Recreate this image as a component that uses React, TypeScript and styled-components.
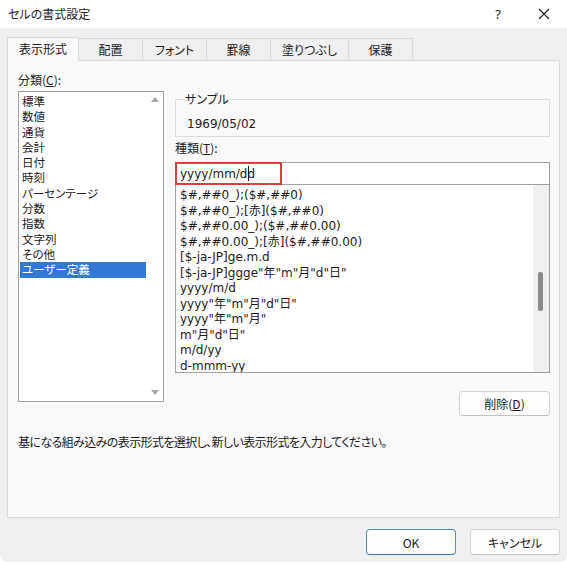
import styled, { createGlobalStyle } from 'styled-components';

const GlobalStyle = createGlobalStyle`
  html,
  body {
    margin: 0;
    padding: 0;
    background: #ffffff;
  }
  body {
    font-family: 'Noto Sans CJK JP', 'Noto Sans', sans-serif;
    font-size: 12px;
    color: #1b1b1b;
    font-feature-settings: 'palt';
  }
  * {
    box-sizing: border-box;
  }
`;

const Dialog = styled.div`
  width: 567px;
  height: 562px;
  display: flex;
  flex-direction: column;
  background: #f0f0f0;
  border-radius: 0 0 7px 7px;
  overflow: hidden;
`;

const TitleBar = styled.div`
  height: 28px;
  flex-shrink: 0;
  display: flex;
  align-items: center;
  background: #ffffff;
  padding-left: 8px;
`;

const Title = styled.span`
  flex: 1;
  font-size: 12px;
  line-height: 16px;
`;

const TitleButton = styled.button`
  width: 46px;
  height: 28px;
  padding: 0;
  border: none;
  background: transparent;
  display: flex;
  align-items: center;
  justify-content: center;
  font-family: 'Noto Sans', sans-serif;
  font-size: 13px;
  color: #1b1b1b;
`;

const Body = styled.div`
  flex: 1;
  display: flex;
  flex-direction: column;
  padding: 9px 7px 7px 7px;
`;

const TabRow = styled.div`
  height: 23px;
  display: flex;
  align-items: flex-end;
`;

const Tab = styled.div<{ active?: boolean }>`
  position: relative;
  z-index: ${({ active }) => (active ? 1 : 0)};
  height: ${({ active }) => (active ? '24px' : '22px')};
  margin-bottom: ${({ active }) => (active ? '-1px' : '0')};
  min-width: 65px;
  padding: 0 11px;
  margin-right: -1px;
  display: flex;
  align-items: center;
  justify-content: center;
  background: ${({ active }) => (active ? '#f9f9f9' : '#f0f0f0')};
  border: 1px solid #dadada;
  border-bottom: none;
  font-size: 12px;
  line-height: 16px;
  padding-bottom: ${({ active }) => (active ? '2px' : '0')};
`;

const Panel = styled.div`
  flex: 1;
  background: #f9f9f9;
  border: 1px solid #dadada;
  padding: 11px 9px 0 10px;
  display: grid;
  grid-template-columns: 146px 375px;
  column-gap: 11px;
  align-content: start;
`;

const Column = styled.div`
  display: flex;
  flex-direction: column;
`;

const Label = styled.div`
  font-size: 12px;
  line-height: 16px;
  height: 16px;
`;

const CategoryList = styled.div`
  margin-top: 3px;
  height: 311px;
  border: 1px solid #a2a2a2;
  background: #ffffff;
  display: grid;
  grid-template-columns: 1fr 17px;
`;

const Items = styled.div`
  padding: 2px 0 0 1px;
  overflow: hidden;
`;

const CategoryItem = styled.div<{ selected?: boolean }>`
  height: 15.3px;
  line-height: 15.3px;
  padding-left: 2px;
  font-size: 11.5px;
  white-space: nowrap;
  overflow: hidden;
  background: ${({ selected }) => (selected ? '#3179d5' : 'transparent')};
  color: ${({ selected }) => (selected ? '#ffffff' : '#1b1b1b')};
`;

const ArrowTrack = styled.div`
  display: flex;
  flex-direction: column;
  justify-content: space-between;
  align-items: center;
  padding: 5px 0 6px;
`;

const GroupBox = styled.fieldset`
  margin: 20px 0 0 0;
  padding: 10px 8px 4px 8px;
  min-inline-size: 0;
  border: 1px solid #dcdcdc;
`;

const GroupLegend = styled.legend`
  padding: 0 1px;
  font-size: 12px;
  line-height: 14px;
`;

const SampleValue = styled.div`
  padding-left: 3px;
  font-family: 'DejaVu Sans', 'Noto Sans CJK JP', sans-serif;
  font-size: 12px;
  line-height: 16px;
  font-feature-settings: normal;
`;

const TypeLabel = styled(Label)`
  margin-top: 3px;
`;

const InputBox = styled.div`
  position: relative;
  margin-top: 6px;
  height: 23px;
  border: 1px solid #a0a0a0;
  background: #ffffff;
  padding-left: 4px;
  display: flex;
  align-items: center;
  font-family: 'DejaVu Sans', 'Noto Sans CJK JP', sans-serif;
  font-size: 12px;
  font-feature-settings: normal;
`;

const Caret = styled.span`
  display: inline-block;
  width: 1px;
  height: 15px;
  background: #1b1b1b;
  vertical-align: middle;
  margin: 0 -1px 0 0;
`;

const Highlight = styled.div`
  position: absolute;
  left: -1px;
  top: -1px;
  width: 107px;
  height: 23px;
  border: 2px solid #d2453d;
  pointer-events: none;
`;

const FormatList = styled.div`
  height: 188px;
  border: 1px solid #a0a0a0;
  border-top: none;
  background: #ffffff;
  display: grid;
  grid-template-columns: 1fr 16px;
  overflow: hidden;
`;

const FormatItems = styled.div`
  padding: 3px 0 0 4px;
  overflow: hidden;
`;

const FormatItem = styled.div`
  height: 15.5px;
  line-height: 15.5px;
  font-family: 'DejaVu Sans', 'Noto Sans CJK JP', sans-serif;
  font-size: 12px;
  white-space: nowrap;
  font-feature-settings: normal;
`;

const ScrollTrack = styled.div`
  background: #f0f0f0;
  padding: 87px 0 0 5px;
`;

const ScrollThumb = styled.div`
  width: 5px;
  height: 39px;
  border-radius: 2px;
  background: #8a8a8a;
`;

const Button = styled.button<{ primary?: boolean }>`
  height: 26px;
  padding: 0;
  border: 1px solid ${({ primary }) => (primary ? '#5a8cc4' : '#d3d3d3')};
  border-bottom-color: ${({ primary }) => (primary ? '#3e72b0' : '#c2c2c2')};
  border-radius: 4px;
  background: #fdfdfd;
  font-family: 'Noto Sans CJK JP', sans-serif;
  font-size: 12px;
  color: #1b1b1b;
  font-feature-settings: 'palt';
`;

const DeleteButton = styled(Button)`
  margin-top: 18px;
  height: 25px;
  width: 91px;
  align-self: flex-end;
`;

const Description = styled.div`
  grid-column: 1 / span 2;
  margin-top: 18px;
  font-size: 12px;
  line-height: 16px;
  letter-spacing: -0.6px;
`;

const Footer = styled.div`
  margin-top: 11px;
  display: flex;
  justify-content: flex-end;
  gap: 14px;
`;

const FooterButton = styled(Button)`
  width: 90px;
`;

const categories = [
  '標準',
  '数値',
  '通貨',
  '会計',
  '日付',
  '時刻',
  'パーセンテージ',
  '分数',
  '指数',
  '文字列',
  'その他',
  'ユーザー定義',
];

const formats = [
  '$#,##0_);($#,##0)',
  '$#,##0_);[赤]($#,##0)',
  '$#,##0.00_);($#,##0.00)',
  '$#,##0.00_);[赤]($#,##0.00)',
  '[$-ja-JP]ge.m.d',
  '[$-ja-JP]ggge"年"m"月"d"日"',
  'yyyy/m/d',
  'yyyy"年"m"月"d"日"',
  'yyyy"年"m"月"',
  'm"月"d"日"',
  'm/d/yy',
  'd-mmm-yy',
];

const tabs = ['表示形式', '配置', 'フォント', '罫線', '塗りつぶし', '保護'];

function Arrow({ down }: { down?: boolean }) {
  return (
    <svg width="8" height="5" viewBox="0 0 8 5">
      <path d={down ? 'M0 0 L8 0 L4 5 Z' : 'M0 5 L8 5 L4 0 Z'} fill="#a6a6a6" />
    </svg>
  );
}

export default function App() {
  return (
    <>
      <GlobalStyle />
      <Dialog>
        <TitleBar>
          <Title>セルの書式設定</Title>
          <TitleButton>?</TitleButton>
          <TitleButton>
            <svg width="12" height="12" viewBox="0 0 12 12">
              <path d="M1 1 L11 11 M11 1 L1 11" stroke="#1b1b1b" strokeWidth="1.1" />
            </svg>
          </TitleButton>
        </TitleBar>
        <Body>
          <TabRow>
            {tabs.map((t, i) => (
              <Tab key={t} active={i === 0}>
                {t}
              </Tab>
            ))}
          </TabRow>
          <Panel>
            <Column>
              <Label>
                分類(<u>C</u>):
              </Label>
              <CategoryList>
                <Items>
                  {categories.map((c) => (
                    <CategoryItem key={c} selected={c === 'ユーザー定義'}>
                      {c}
                    </CategoryItem>
                  ))}
                </Items>
                <ArrowTrack>
                  <Arrow />
                  <Arrow down />
                </ArrowTrack>
              </CategoryList>
            </Column>
            <Column>
              <GroupBox>
                <GroupLegend>サンプル</GroupLegend>
                <SampleValue>1969/05/02</SampleValue>
              </GroupBox>
              <TypeLabel>
                種類(<u>T</u>):
              </TypeLabel>
              <InputBox>
                yyyy/mm/d
                <Caret />d
                <Highlight />
              </InputBox>
              <FormatList>
                <FormatItems>
                  {formats.map((f) => (
                    <FormatItem key={f}>{f}</FormatItem>
                  ))}
                </FormatItems>
                <ScrollTrack>
                  <ScrollThumb />
                </ScrollTrack>
              </FormatList>
              <DeleteButton>
                削除(<u>D</u>)
              </DeleteButton>
            </Column>
            <Description>基になる組み込みの表示形式を選択し、新しい表示形式を入力してください。</Description>
          </Panel>
          <Footer>
            <FooterButton primary>OK</FooterButton>
            <FooterButton>キャンセル</FooterButton>
          </Footer>
        </Body>
      </Dialog>
    </>
  );
}
